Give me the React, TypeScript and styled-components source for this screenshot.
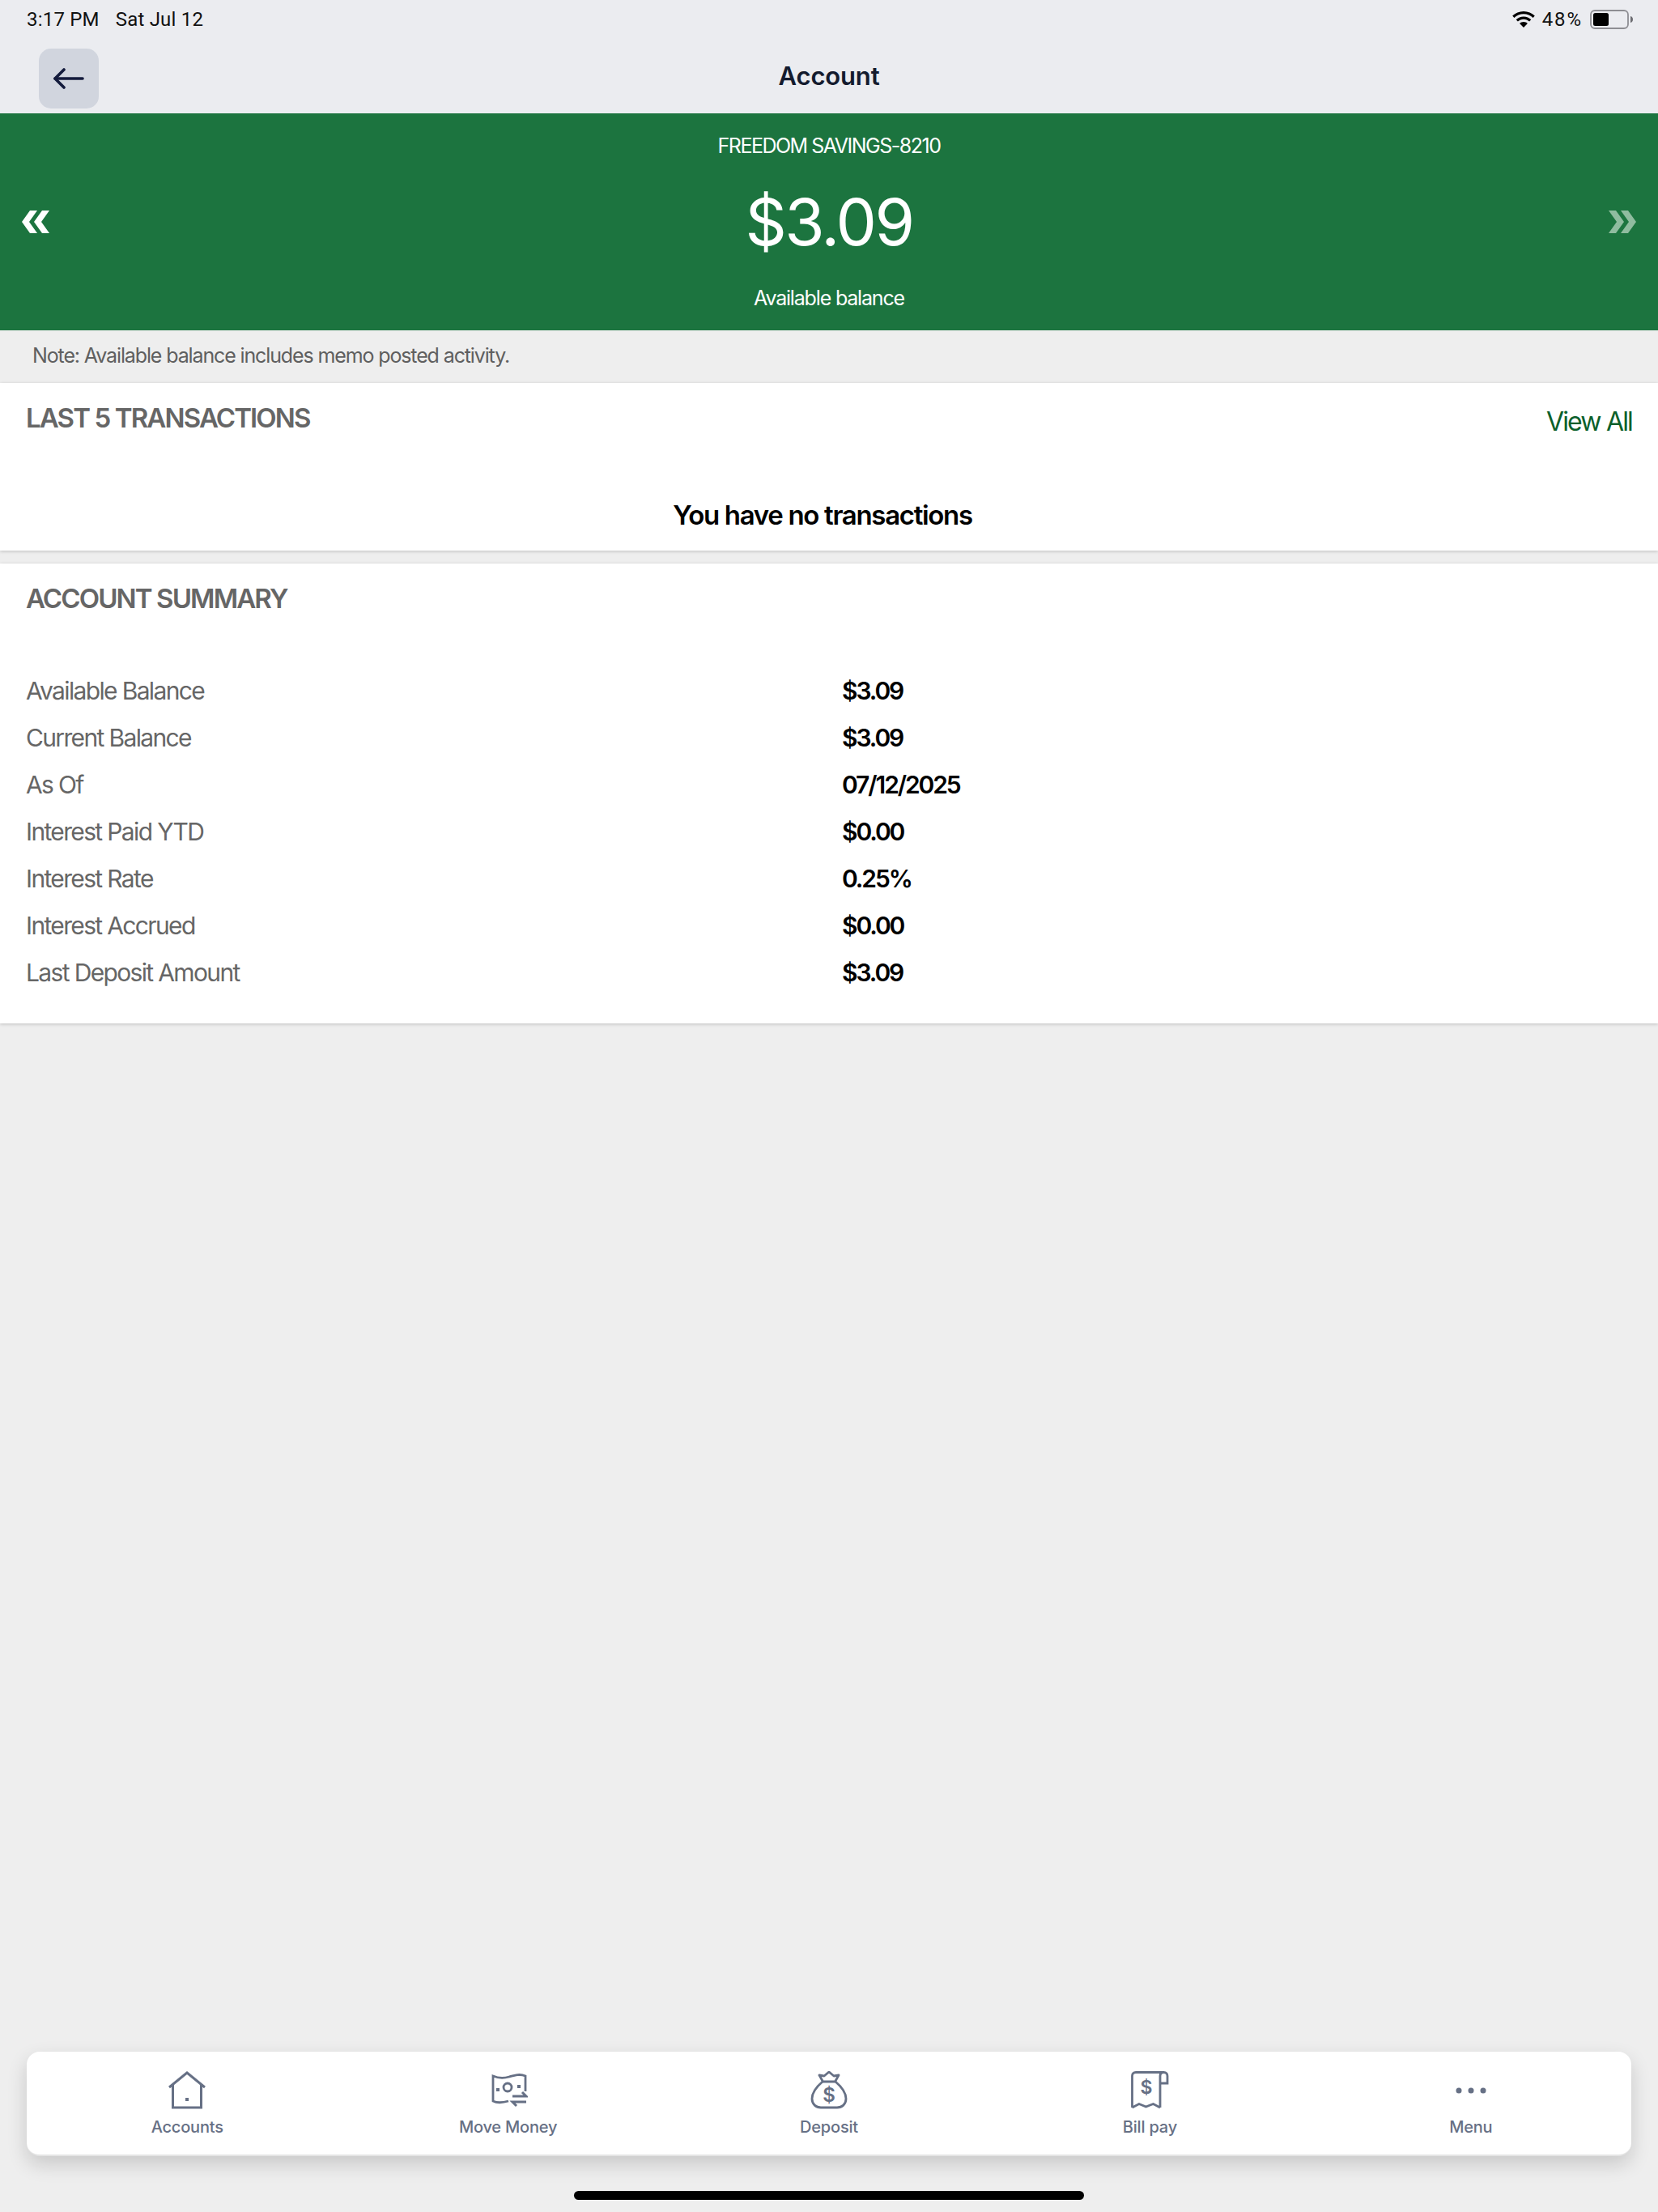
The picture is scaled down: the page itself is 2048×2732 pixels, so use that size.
import React from 'react';
import styled, { createGlobalStyle } from 'styled-components';

const GlobalStyle = createGlobalStyle`
  html, body {
    margin: 0;
    padding: 0;
    background: #eeeeee;
    font-family: Inter, "Liberation Sans", sans-serif;
  }
  * {
    box-sizing: border-box;
  }
`;

const Page = styled.div`
  width: 2048px;
  height: 2732px;
  display: flex;
  flex-direction: column;
  background: #eeeeee;
`;

const TopArea = styled.header`
  height: 140px;
  background: #ebecf0;
`;

const StatusBar = styled.div`
  height: 47px;
  padding: 0 30px 0 33px;
  display: flex;
  justify-content: space-between;
  align-items: center;
  font-family: Roboto, sans-serif;
  font-size: 24px;
  letter-spacing: 0.2px;
  color: #111111;
`;

const StatusGroup = styled.div`
  display: flex;
  align-items: center;
  gap: ${(p: { $gap: number }) => p.$gap}px;
`;

const BatteryText = styled.span`
  letter-spacing: 1.9px;
`;

const TitleRow = styled.div`
  height: 93px;
  padding: 0 48px;
  display: grid;
  grid-template-columns: 1fr auto 1fr;
  align-items: start;
`;

const BackButton = styled.button`
  width: 74px;
  height: 74px;
  margin-top: 13px;
  padding: 0;
  border: 0;
  border-radius: 15px;
  background: #d1d5de;
  display: flex;
  align-items: center;
  justify-content: center;
`;

const Title = styled.h1`
  margin: 0;
  padding-top: 28px;
  font-size: 31px;
  line-height: 38px;
  font-weight: 600;
  letter-spacing: -0.005em;
  color: #141b2e;
`;

const Hero = styled.section`
  height: 268px;
  background: #1c743f;
  color: #ffffff;
  display: grid;
  grid-template-columns: 1fr auto 1fr;
  align-items: center;
  padding: 0 27px;
`;

const HeroCenter = styled.div`
  display: flex;
  flex-direction: column;
  align-items: center;
`;

const AccountName = styled.div`
  font-size: 25px;
  line-height: 30px;
  letter-spacing: -0.06em;
  margin-bottom: 34px;
`;

const Amount = styled.div`
  font-size: 80px;
  line-height: 90px;
  letter-spacing: -0.033em;
  margin-bottom: 34px;
`;

const AmountLabel = styled.div`
  font-size: 25px;
  line-height: 30px;
  letter-spacing: -0.047em;
`;

const Chevrons = styled.svg<{ $end?: boolean }>`
  justify-self: ${(p) => (p.$end ? 'end' : 'start')};
`;

const Note = styled.div`
  height: 65px;
  padding: 16px 40px 0;
  font-size: 25px;
  line-height: 30px;
  letter-spacing: -0.045em;
  color: #5f5f5f;
`;

const Card = styled.section<{ $height: number }>`
  height: ${(p) => p.$height}px;
  background: #ffffff;
  padding: 0 32px;
  box-shadow: 0 1px 4px rgba(0, 0, 0, 0.2);
`;

const CardHead = styled.div`
  height: 88px;
  display: flex;
  justify-content: space-between;
  align-items: flex-start;
`;

const CardTitle = styled.h2`
  margin: 0;
  padding-top: 22px;
  font-size: 33px;
  line-height: 42px;
  font-weight: 600;
  letter-spacing: -0.057em;
  color: #666666;
`;

const ViewAll = styled.a`
  padding-top: 28px;
  font-size: 32px;
  line-height: 40px;
  letter-spacing: -0.057em;
  color: #0b5f2b;
`;

const EmptyText = styled.p`
  margin: 0;
  padding: 54px 16px 0 0;
  text-align: center;
  font-size: 33px;
  line-height: 42px;
  font-weight: 600;
  letter-spacing: -0.04em;
  color: #000000;
`;

const Spacer = styled.div`
  height: 16px;
`;

const SummaryList = styled.dl`
  margin: 40px 0 0;
  display: grid;
  grid-template-columns: 1008px 1fr;
  grid-auto-rows: 58px;
  align-items: center;
`;

const Label = styled.dt`
  font-size: 30px;
  letter-spacing: -0.055em;
  color: #666666;
`;

const Value = styled.dd`
  margin: 0;
  font-size: 30px;
  font-weight: 600;
  letter-spacing: -0.07em;
  color: #000000;
`;

const BottomNav = styled.nav`
  margin: auto 33px 0;
  height: 129px;
  border-radius: 16px;
  background: #ffffff;
  border-bottom: 2px solid #e4e4e4;
  box-shadow: 0 10px 24px rgba(0, 0, 0, 0.16);
  display: grid;
  grid-template-columns: repeat(5, 1fr);
`;

const NavItem = styled.a`
  padding-top: 24px;
  display: flex;
  flex-direction: column;
  align-items: center;
  gap: 9px;
  font-size: 20px;
  line-height: 24px;
  font-weight: 500;
  letter-spacing: -0.01em;
  color: #667085;
`;

const HomeBarWrap = styled.div`
  height: 69px;
  padding-top: 43px;
  display: flex;
  justify-content: center;
`;

const HomeBar = styled.div`
  width: 630px;
  height: 11px;
  border-radius: 6px;
  background: #000000;
`;

const iconColor = '#667085';

const HomeIcon = () => (
  <svg width="48" height="48" viewBox="0 0 48 48" fill="none" stroke={iconColor} strokeWidth="3">
    <path d="M2 20 24 2l22 18" />
    <path d="M6.500 17v28h35V17" />
    <rect x="22" y="33" width="4" height="4" fill={iconColor} stroke="none" />
  </svg>
);

const MoneyIcon = () => (
  <svg width="48" height="48" viewBox="0 0 48 48" fill="none" stroke={iconColor} strokeWidth="2.800">
    <path d="M45 25V6c-7-3-13-1-20 1-7 2-13 2-20-1v31c6 3 12 2 19 0" />
    <circle cx="23" cy="20" r="5" />
    <rect x="9" y="21" width="4" height="4" fill={iconColor} stroke="none" />
    <rect x="35" y="17" width="4" height="4" fill={iconColor} stroke="none" />
    <path d="M29 31h17l-5-5" strokeWidth="3" />
    <path d="M46 38H29l5 5" strokeWidth="3" />
  </svg>
);

const BagIcon = () => (
  <svg width="48" height="48" viewBox="0 0 48 48" fill="none" stroke={iconColor} strokeWidth="2.800" strokeLinejoin="round">
    <path d="M12 5l6 1 6-5 6 5 6-1-4.500 8h-15z" />
    <path d="M16 13C9 19 3 26 3 34c0 7 5 11 11 11h20c6 0 11-4 11-11 0-8-6-15-13-21" />
    <text x="24" y="38" textAnchor="middle" fontFamily="Inter, sans-serif" fontSize="24" fontWeight="600" fill={iconColor} stroke="none">
      $
    </text>
  </svg>
);

const BillIcon = () => (
  <svg width="48" height="48" viewBox="0 0 48 48" fill="none" stroke={iconColor} strokeWidth="2.800">
    <path d="M2.500 45V6q0-4.500 4.500-4.500h35" />
    <path d="M37 15h9V6q0-4.500-4.500-4.500T37 6v39" />
    <path d="M2.500 45 11 40.500l8.500 3.500 9-3.500L37 45" />
    <text x="20" y="28" textAnchor="middle" fontFamily="Inter, sans-serif" fontSize="23" fontWeight="600" fill={iconColor} stroke="none">
      $
    </text>
  </svg>
);

const MenuIcon = () => (
  <svg width="48" height="48" viewBox="0 0 48 48" fill={iconColor}>
    <circle cx="9" cy="24" r="3.500" />
    <circle cx="24" cy="24" r="3.500" />
    <circle cx="39" cy="24" r="3.500" />
  </svg>
);

const WifiIcon = () => (
  <svg width="28" height="20" viewBox="0 0 28 20" fill="#000000">
    <path d="M14 0C8.600 0 3.800 2.100.2 5.600l2.200 2.300C5.400 5 9.500 3.200 14 3.200s8.600 1.800 11.600 4.700l2.200-2.300C24.200 2.100 19.400 0 14 0z" />
    <path d="M14 6.500c-3.600 0-6.900 1.400-9.300 3.700l2.200 2.300C8.800 10.800 11.300 9.700 14 9.700s5.200 1.100 7.100 2.800l2.200-2.300C20.900 7.900 17.600 6.500 14 6.500z" />
    <path d="M14 13c-1.900 0-3.600.7-4.900 1.900L14 20l4.900-5.100C17.600 13.700 15.900 13 14 13z" />
  </svg>
);

const BatteryIcon = () => (
  <svg width="54" height="24" viewBox="0 0 54 24">
    <rect x="1" y="1" width="46" height="22" rx="5" fill="none" stroke="#8e8e93" strokeWidth="1.800" />
    <rect x="4" y="4" width="19" height="16" rx="2.500" fill="#000000" />
    <path d="M50 8c2 .6 3 2 3 4s-1 3.400-3 4z" fill="#6d6d72" />
  </svg>
);

const ChevronPair = ({ right }: { right?: boolean }) => (
  <Chevrons
    $end={right}
    width="34"
    height="28"
    viewBox="0 0 34 28"
    fill={right ? '#8fbc9f' : '#ffffff'}
    style={right ? { transform: 'scaleX(-1)' } : undefined}
  >
    <path d="M0 14 10 0h9L9 14l10 14h-9z" />
    <path d="M15 14 25 0h9L24 14l10 14h-9z" />
  </Chevrons>
);

const summaryRows = [
  ['Available Balance', '$3.09'],
  ['Current Balance', '$3.09'],
  ['As Of', '07/12/2025'],
  ['Interest Paid YTD', '$0.00'],
  ['Interest Rate', '0.25%'],
  ['Interest Accrued', '$0.00'],
  ['Last Deposit Amount', '$3.09'],
];

const navItems = [
  { label: 'Accounts', icon: <HomeIcon /> },
  { label: 'Move Money', icon: <MoneyIcon /> },
  { label: 'Deposit', icon: <BagIcon /> },
  { label: 'Bill pay', icon: <BillIcon /> },
  { label: 'Menu', icon: <MenuIcon /> },
];

const App: React.FC = () => {
  return (
    <Page>
      <GlobalStyle />
      <TopArea>
        <StatusBar>
          <StatusGroup $gap={20}>
            <span>3:17 PM</span>
            <span>Sat Jul 12</span>
          </StatusGroup>
          <StatusGroup $gap={9}>
            <WifiIcon />
            <BatteryText>48%</BatteryText>
            <BatteryIcon />
          </StatusGroup>
        </StatusBar>
        <TitleRow>
          <BackButton aria-label="Back">
            <svg width="38" height="26" viewBox="0 0 38 26" fill="none" stroke="#141b3c" strokeWidth="3.600" strokeLinecap="round" strokeLinejoin="round">
              <path d="M36 13H2" />
              <path d="M13 2 2 13l11 11" />
            </svg>
          </BackButton>
          <Title>Account</Title>
        </TitleRow>
      </TopArea>

      <Hero>
        <ChevronPair />
        <HeroCenter>
          <AccountName>FREEDOM SAVINGS-8210</AccountName>
          <Amount>$3.09</Amount>
          <AmountLabel>Available balance</AmountLabel>
        </HeroCenter>
        <ChevronPair right />
      </Hero>

      <Note>Note: Available balance includes memo posted activity.</Note>

      <Card $height={207}>
        <CardHead>
          <CardTitle>LAST 5 TRANSACTIONS</CardTitle>
          <ViewAll>View All</ViewAll>
        </CardHead>
        <EmptyText>You have no transactions</EmptyText>
      </Card>
      <Spacer />
      <Card $height={568}>
        <CardHead>
          <CardTitle>ACCOUNT SUMMARY</CardTitle>
        </CardHead>
        <SummaryList>
          {summaryRows.map(([label, value]) => (
            <React.Fragment key={label}>
              <Label>{label}</Label>
              <Value>{value}</Value>
            </React.Fragment>
          ))}
        </SummaryList>
      </Card>

      <BottomNav>
        {navItems.map((item) => (
          <NavItem key={item.label}>
            {item.icon}
            {item.label}
          </NavItem>
        ))}
      </BottomNav>
      <HomeBarWrap>
        <HomeBar />
      </HomeBarWrap>
    </Page>
  );
};

export default App;
